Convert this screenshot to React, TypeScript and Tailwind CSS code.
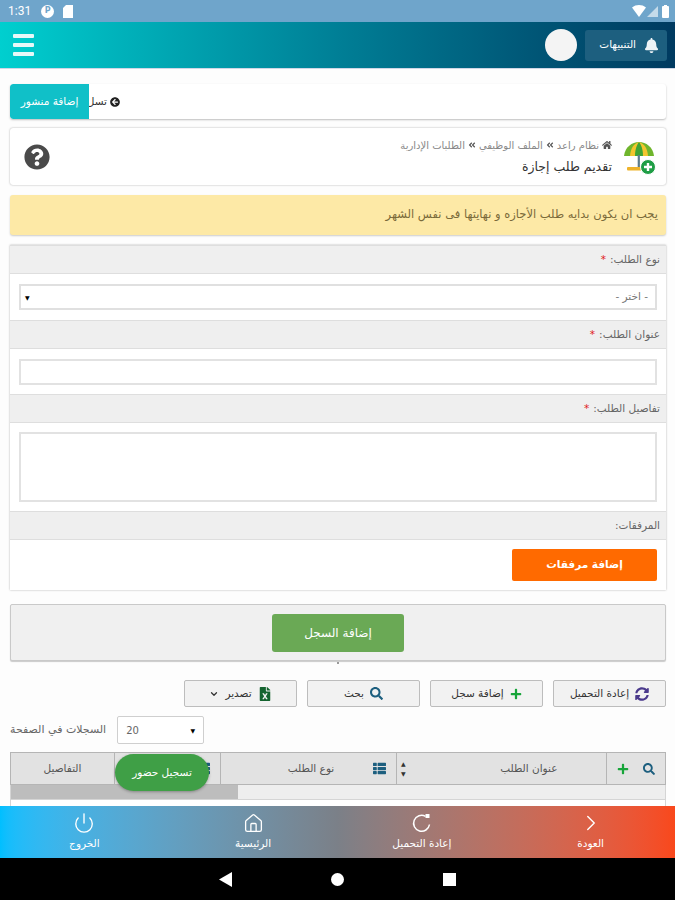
import { ChevronRight, Home, Power, ChevronDown } from "lucide-react";
import {
  FaBell,
  FaFileExcel,
  FaHome,
  FaPlus,
  FaQuestionCircle,
  FaSearch,
  FaSyncAlt,
  FaThList,
  FaArrowCircleLeft,
  FaAngleDoubleLeft,
} from "react-icons/fa";

function Label({ text, required = false }: { text: string; required?: boolean }) {
  return (
    <div className="h-[29px] bg-[#efefef] border-y border-[#dedede] flex items-center px-[6px] text-[10.5px] text-[#666]">
      {text}
      {required && <span className="text-[#e02020] mr-[4px]">*</span>}
    </div>
  );
}

function ToolButton({ children }: { children: React.ReactNode }) {
  return (
    <button className="w-[113px] h-[27px] bg-[#f2f2f2] border border-[#bdbdbd] rounded-[2px] flex items-center justify-center gap-[6px] text-[10.5px] text-[#333]">
      {children}
    </button>
  );
}

function NavItem({ icon, text }: { icon: React.ReactNode; text: string }) {
  return (
    <div className="flex-1 flex flex-col items-center pt-[6px] text-white text-[10.5px]">
      <div className="h-[22px] flex items-center justify-center">{icon}</div>
      <span className="mt-[2px] leading-[14px]">{text}</span>
    </div>
  );
}

function Umbrella() {
  return (
    <svg width="35" height="34" viewBox="0 0 35 34">
      <path d="M0 14 C1 5 8 0 15 0 C22 0 29 5 30 14 Z" fill="#6fb52c" />
      <path d="M6 14 C6.5 6 10 1.5 15 0 C20 1.5 23.5 6 24 14 Z" fill="#f3c52e" />
      <path d="M11 14 C11 7 13 2.5 15 0 C17 2.5 19 7 19 14 Z" fill="#3fa535" />
      <rect x="13.7" y="13" width="2.2" height="14" fill="#5c7c8c" />
      <rect x="3" y="25" width="20" height="3.5" rx="1" fill="#eeb32b" />
      <circle cx="24" cy="25" r="7.5" fill="#1f9e46" stroke="#fff" strokeWidth="1" />
      <path d="M24 21v8M20 25h8" stroke="#fff" strokeWidth="2.4" />
    </svg>
  );
}

function ReloadIcon() {
  return (
    <svg width="22" height="22" viewBox="0 0 22 22" fill="none">
      <path d="M14.5 4.3 A8 8 0 1 0 18.5 12.5" stroke="#fff" strokeWidth="1.5" />
      <rect x="14.5" y="2" width="4" height="4" fill="#fff" />
    </svg>
  );
}

export default function App() {
  return (
    <div dir="rtl" className="w-[675px] h-[900px] overflow-hidden flex flex-col bg-[#fdfdfd] font-['DejaVu_Sans',sans-serif]">
      {/* status bar */}
      <div dir="ltr" className="h-[22px] bg-[#6fa5cb] flex items-center pl-[8px] pr-[6px] text-white text-[12px] shrink-0">
        <span className="font-['Roboto',sans-serif]">1:31</span>
        <span className="ml-[10px] w-[13px] h-[13px] rounded-full bg-white flex items-center justify-center text-[#6fa5cb] text-[8px] font-bold">P</span>
        <svg className="ml-[9px]" width="10" height="13" viewBox="0 0 10 13">
          <path d="M3 0h7v13H0V3z" fill="#fff" />
        </svg>
        <svg className="ml-auto" width="14" height="12" viewBox="0 0 14 12">
          <path d="M0 2.5C4 -0.8 10 -0.8 14 2.5L7 12z" fill="#fff" />
        </svg>
        <svg className="ml-[1px]" width="11" height="11" viewBox="0 0 11 11">
          <path d="M11 0v11H0z" fill="#fff" fillOpacity="0.6" />
        </svg>
        <svg className="ml-[4px]" width="7" height="13" viewBox="0 0 7 13">
          <rect x="0" y="1" width="7" height="12" rx="1" fill="#fff" />
          <rect x="2" y="0" width="3" height="2" fill="#fff" />
        </svg>
      </div>

      {/* header */}
      <div dir="ltr" className="h-[47px] shrink-0 bg-gradient-to-r from-[#00cfcf] via-[#007f96] to-[#003a60] flex items-center pl-[13px] pr-[8px] border-b border-[#cfd6e6]">
        <div className="flex flex-col gap-[5px] w-[21px]">
          <span className="h-[4px] bg-[#e8f8f8] rounded-[1px]" />
          <span className="h-[4px] bg-[#e8f8f8] rounded-[1px]" />
          <span className="h-[4px] bg-[#e8f8f8] rounded-[1px]" />
        </div>
        <div className="ml-auto w-[32px] h-[32px] rounded-full bg-[#f4f4f4]" />
        <div dir="rtl" className="ml-[8px] w-[82px] h-[31px] bg-[#1d5f7f] rounded-[3px] flex items-center gap-[8px] px-[8px] text-white text-[10.5px]">
          <FaBell size={15} className="text-[#eef3f6]" />
          <span>التنبيهات</span>
        </div>
      </div>

      {/* page body */}
      <div className="flex-1 min-h-0 overflow-hidden pr-[9px] pl-[10px] pt-[15px] flex flex-col">
        {/* news ticker */}
        <div className="h-[35px] shrink-0 bg-white rounded-[3px] shadow-[0_1px_2px_rgba(0,0,0,0.25)] flex items-stretch overflow-hidden text-[10.5px] text-[#333]">
          <div className="flex-1 min-w-0 overflow-hidden flex items-center">
            <span className="mr-[546px] flex items-center gap-[3px] whitespace-nowrap">
              <FaArrowCircleLeft size={10} className="text-[#222]" />
              تسل
            </span>
          </div>
          <div className="w-[79px] shrink-0 bg-[#10c0c8] rounded-l-[3px] flex items-center justify-center text-white">
            إضافة منشور
          </div>
        </div>

        {/* page title */}
        <div className="mt-[9px] h-[57px] shrink-0 bg-white rounded-[3px] shadow-[0_0_2px_rgba(0,0,0,0.35)] flex items-center pr-[7px] pl-[14px]">
          <div className="mt-[4px]">
            <Umbrella />
          </div>
          <div className="mr-[12px]">
            <div className="flex items-center gap-[3px] text-[10px] text-[#888]">
              <FaHome size={10} className="text-[#555]" />
              <span>نظام راعد</span>
              <FaAngleDoubleLeft size={8} className="text-[#555]" />
              <span>الملف الوظيفي</span>
              <FaAngleDoubleLeft size={8} className="text-[#555]" />
              <span>الطلبات الإدارية</span>
            </div>
            <div className="mt-[5px] text-[12.5px] leading-[18px] text-[#333]">تقديم طلب إجازة</div>
          </div>
          <FaQuestionCircle size={26} className="mr-auto text-[#4a4a4a]" />
        </div>

        {/* notice */}
        <div className="mt-[10px] h-[40px] shrink-0 bg-[#fde9a6] rounded-[3px] shadow-[0_1px_2px_rgba(0,0,0,0.2)] flex items-center px-[8px] text-[11.5px] text-[#7a6a3a]">
          يجب ان يكون بدايه طلب الأجازه و نهايتها فى نفس الشهر
        </div>

        {/* form */}
        <div className="mt-[10px] shrink-0 bg-white shadow-[0_0_2px_rgba(0,0,0,0.3)]">
          <Label text="نوع الطلب:" required />
          <div className="h-[46px] px-[9px] flex items-center">
            <div className="w-full h-[26px] border-2 border-[#e0e0e0] flex items-center justify-between pr-[7px] pl-[4px] text-[10.5px] text-[#777]">
              <span>- اختر -</span>
              <span className="text-[6px] text-black">▼</span>
            </div>
          </div>
          <Label text="عنوان الطلب:" required />
          <div className="h-[45px] px-[9px] flex items-center">
            <div className="w-full h-[26px] border-2 border-[#e2e2e2]" />
          </div>
          <Label text="تفاصيل الطلب:" required />
          <div className="h-[88px] px-[9px] flex items-center">
            <div className="w-full h-[70px] border-2 border-[#e2e2e2]" />
          </div>
          <Label text="المرفقات:" />
          <div className="h-[50px] px-[9px] flex items-center">
            <button className="w-[145px] h-[32px] bg-[#ff6a00] rounded-[2px] text-white text-[10.5px] font-bold">إضافة مرفقات</button>
          </div>
        </div>

        {/* submit panel */}
        <div className="relative mt-[14px] h-[57px] shrink-0 bg-[#f0f0f0] border border-[#c9c9c9] rounded-[2px] shadow-[0_1px_1px_rgba(0,0,0,0.2)] flex items-center justify-center">
          <button className="w-[132px] h-[38px] bg-[#6aa955] rounded-[3px] text-white text-[12px]">إضافة السجل</button>
          <span className="absolute top-[57px] left-[326px] w-[2px] h-[2px] bg-[#999]" />
        </div>

        {/* toolbar */}
        <div className="mt-[19px] shrink-0 flex gap-[10px]">
          <ToolButton>
            <FaSyncAlt size={14} className="text-[#4b3a8c]" />
            إعادة التحميل
          </ToolButton>
          <ToolButton>
            <FaPlus size={12} className="text-[#18a53a]" />
            إضافة سجل
          </ToolButton>
          <ToolButton>
            <FaSearch size={13} className="text-[#1d5f7f]" />
            بحث
          </ToolButton>
          <ToolButton>
            <FaFileExcel size={14} className="text-[#14632f]" />
            تصدير
            <ChevronDown size={10} strokeWidth={3} />
          </ToolButton>
        </div>

        {/* page size */}
        <div className="mt-[9px] shrink-0 flex items-center justify-end gap-[11px] text-[11px] text-[#666]">
          <div dir="ltr" className="w-[87px] h-[28px] bg-white border border-[#cfcfcf] rounded-[2px] flex items-center justify-between px-[8px] text-[10px]">
            <span>20</span>
            <span className="text-[6px] text-black">▼</span>
          </div>
          <span>السجلات في الصفحة</span>
        </div>

        {/* table */}
        <div className="relative mt-[8px] shrink-0">
          <div className="h-[33px] bg-[#e2e2e2] border border-[#b5b5b5] flex text-[10.5px] text-[#555]">
            <div className="w-[59px] flex items-center justify-center gap-[14px] border-l border-[#b5b5b5]">
              <FaSearch size={12} className="text-[#1d5f7f]" />
              <FaPlus size={12} className="text-[#18a53a]" />
            </div>
            <div className="w-[210px] flex items-center border-l border-[#b5b5b5] pl-[4px]">
              <span className="flex-1 text-center pl-[46px]">عنوان الطلب</span>
              <span className="flex flex-col text-[6px] leading-[10px] text-[#333]">
                <span>▲</span>
                <span>▼</span>
              </span>
            </div>
            <div className="w-[176px] flex items-center border-l border-[#b5b5b5] pr-[10px]">
              <FaThList size={13} className="text-[#1d5f7f]" />
              <span className="flex-1 text-center pl-[28px]">نوع الطلب</span>
            </div>
            <div className="w-[106px] flex items-center border-l border-[#b5b5b5] pr-[10px]">
              <FaThList size={13} className="text-[#1d5f7f]" />
            </div>
            <div className="flex-1 flex items-center justify-center">التفاصيل</div>
          </div>
          <div className="h-[14px] bg-[#eeeeee] border-x border-[#d5d5d5] flex justify-end">
            <div className="w-[227px] bg-[#bdbdbd]" />
          </div>
          <div className="h-[8px] border border-[#d5d5d5] bg-white" />
          <div className="absolute left-[105px] top-[2px] w-[94px] h-[37px] rounded-full bg-[#3f9f46] shadow-[0_1px_3px_rgba(0,0,0,0.3)] flex items-center justify-center text-white text-[10.5px]">
            تسجيل حضور
          </div>
        </div>
      </div>

      {/* bottom nav */}
      <div className="h-[52px] shrink-0 bg-gradient-to-l from-[#f9481b] via-[#7b8088] to-[#00bfff] flex">
        <NavItem icon={<ChevronRight size={26} strokeWidth={1.3} />} text="العودة" />
        <NavItem icon={<ReloadIcon />} text="إعادة التحميل" />
        <NavItem icon={<Home size={21} strokeWidth={1.5} />} text="الرئيسية" />
        <NavItem icon={<Power size={22} strokeWidth={1.5} />} text="الخروج" />
      </div>

      {/* android nav */}
      <div className="h-[42px] shrink-0 bg-black flex items-center justify-center gap-[99px]">
        <div className="w-[13px] h-[13px] bg-white" />
        <div className="w-[13px] h-[13px] bg-white rounded-full" />
        <svg width="13" height="15" viewBox="0 0 13 15">
          <path d="M13 0v15L0 7.5z" fill="#fff" />
        </svg>
      </div>
    </div>
  );
}
